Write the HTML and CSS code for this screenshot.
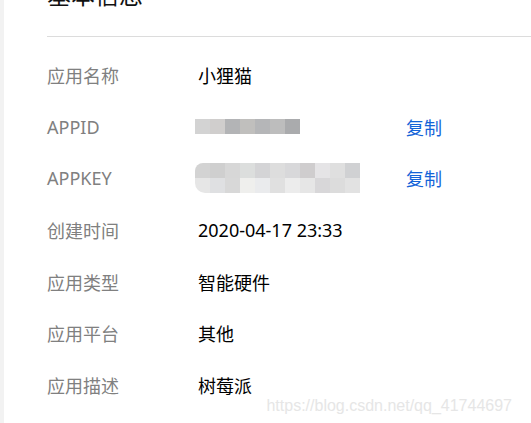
FILE: index.html
```html
<!DOCTYPE html>
<html lang="zh-CN">
<head>
  <meta charset="UTF-8" />
  <title>基本信息</title>
  <link rel="stylesheet" href="styles.css">
</head>
<body>
  <div class="page">
    <div class="panel">
      <h2 class="title">基本信息</h2>
      <div class="divider"></div>

      <div class="info">
        <div class="label">应用名称</div>
        <div class="value">小狸猫</div>
        <div></div>

        <div class="label">APPID</div>
        <div class="value">
          <div class="mosaic mosaic-id">
            <span style="background:#d3d3d3"></span><span style="background:#d0cecd"></span><span style="background:#b3b4b6"></span><span style="background:#c0bfbd"></span><span style="background:#b5b6b8"></span><span style="background:#bdbdbd"></span><span style="background:#aaabad"></span>
          </div>
        </div>
        <a class="copy" href="#">复制</a>

        <div class="label">APPKEY</div>
        <div class="value">
          <div class="mosaic mosaic-key">
            <span style="background:#d3d3d3"></span><span style="background:#cfcfcf"></span><span style="background:#d7d7d7"></span><span style="background:#dcdedd"></span><span style="background:#d4d4d6"></span><span style="background:#dddddd"></span><span style="background:#d8d8da"></span><span style="background:#cfcdce"></span><span style="background:#e5e4e6"></span><span style="background:#dfdfdf"></span><span style="background:#d0d1d3"></span>
            <span style="background:#e6e6e6"></span><span style="background:#dfe0e2"></span><span style="background:#d8d8d8"></span><span style="background:#efefed"></span><span style="background:#eaebed"></span><span style="background:#e0e0e0"></span><span style="background:#ececec"></span><span style="background:#e6e6e6"></span><span style="background:#d8d7d9"></span><span style="background:#dcdcdc"></span><span style="background:#e2e2e2"></span>
          </div>
        </div>
        <a class="copy" href="#">复制</a>

        <div class="label">创建时间</div>
        <div class="value">2020-04-17 23:33</div>
        <div></div>

        <div class="label">应用类型</div>
        <div class="value">智能硬件</div>
        <div></div>

        <div class="label">应用平台</div>
        <div class="value">其他</div>
        <div></div>

        <div class="label">应用描述</div>
        <div class="value">树莓派</div>
        <div></div>
      </div>
    </div>
    <div class="watermark">https://blog.csdn.net/qq_41744697</div>
  </div>
</body>
</html>
```

FILE: styles.css
```css
body {
  margin: 0;
  background: #fff;
  font-family: 'Noto Sans', 'Noto Sans CJK SC', sans-serif;
  overflow: hidden;
}

.page {
  position: relative;
  display: flow-root;
  height: 423px;
  border-left: 4px solid #f2f2f2;
}

.panel {
  padding-left: 43px;
}

.title {
  margin: -17px 0 0;
  font-size: 24px;
  line-height: 24px;
  font-weight: normal;
  color: #111;
}

.divider {
  height: 1px;
  background: #dcdcdc;
  margin-top: 29px;
}

.info {
  display: grid;
  grid-template-columns: 151px 208px auto;
  grid-auto-rows: 51.7px;
  align-items: center;
  padding-top: 12px;
  font-size: 18px;
}

.label {
  color: #808080;
}

.value {
  color: #000;
}

.copy {
  color: #1464d8;
  text-decoration: none;
}

.mosaic {
  display: grid;
  grid-auto-rows: 15px;
  margin-left: -3px;
}

.mosaic-id {
  grid-template-columns: repeat(7, 15px);
}

.mosaic-key {
  grid-template-columns: repeat(11, 15px);
  border-radius: 8px 2px 2px 10px;
  overflow: hidden;
}

.watermark {
  position: absolute;
  right: 19px;
  bottom: 8px;
  font-family: 'Liberation Sans', Arial, sans-serif;
  font-size: 16px;
  color: #e6e6e6;
}
```
